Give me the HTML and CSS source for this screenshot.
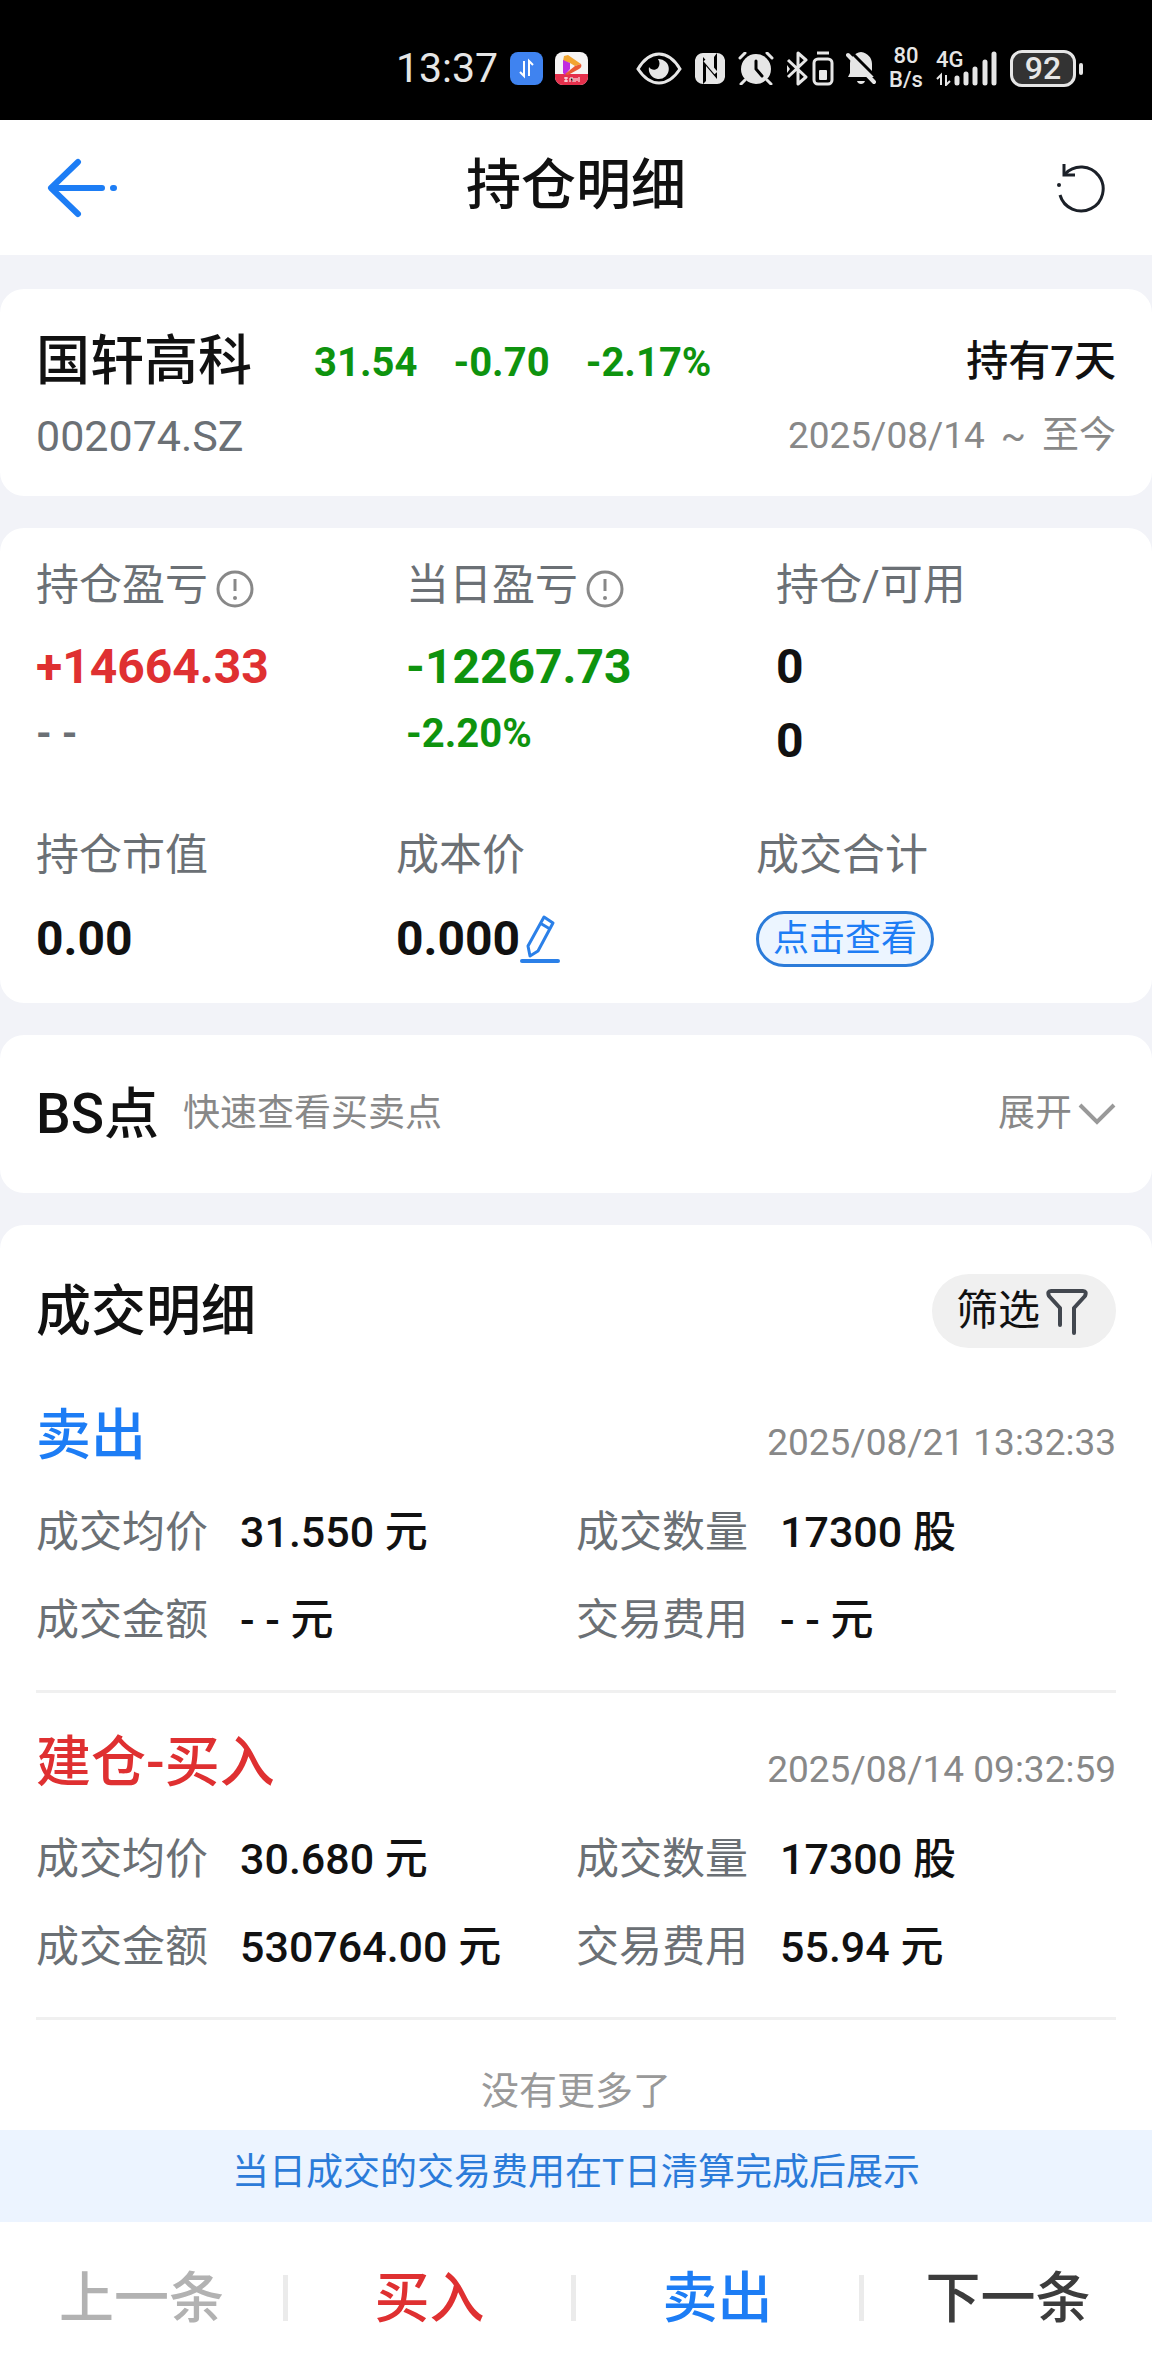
FILE: index.html
```html
<!DOCTYPE html>
<html lang="zh-CN">
<head>
    <meta charset="UTF-8">
    <meta name="viewport" content="width=device-width, initial-scale=1.0">
    <title>持仓明细</title>
    <link rel="stylesheet" href="styles.css">
</head>
<body>
    <div class="status-bar">
        <span class="clock">13:37</span>
        <svg class="app-icon" width="33" height="33" viewBox="0 0 33 33">
            <rect width="33" height="33" rx="8" fill="#3f83f0"/>
            <path d="M14 9v15l-4-4M19 24V9l4 4" fill="none" stroke="#fff" stroke-width="2"/>
        </svg>
        <svg class="app-icon" width="33" height="33" viewBox="0 0 33 33">
            <rect width="33" height="33" rx="8" fill="#f6f4f4"/>
            <path d="M0 22h33v3a8 8 0 0 1-8 8H8a8 8 0 0 1-8-8z" fill="#e5304c"/>
            <path d="M9 4l4-1 13 9-6 2-5-3-7-2z" fill="#f2a531"/>
            <path d="M8 8l7 3v6l-5 6-2-2z" fill="#c02be0"/>
            <path d="M26 12c1 2 0 4-2 5l-11 6-3-1 10-8z" fill="#ea5a34"/>
            <path d="M9 26h4M11 25v5M9 29h4M15 26v4M15 26h3v4M20 26v4M22 26v3M24 25v5" stroke="#fff" stroke-width="1"/>
        </svg>
        <svg class="eye" width="46" height="33" viewBox="0 0 46 33">
            <path d="M2 17C8 7 15 2 23 2s15 5 21 15c-6 9-13 14-21 14S8 26 2 17z" fill="none" stroke="#e6e6e6" stroke-width="3"/>
            <path d="M22 7a10 10 0 1 1-9 8c2 3 6 4 9 1 2-3 2-6 0-9z" fill="#e6e6e6"/>
        </svg>
        <svg width="32" height="33" viewBox="0 0 32 33">
            <path d="M9 1v31a8 8 0 0 1-8-7V8a8 8 0 0 1 8-7zM23 1a8 8 0 0 1 8 7v17a8 8 0 0 1-8 7z" fill="#e6e6e6"/>
            <path d="M9 1h14l-3 4v12L9 5zM9 32l3-3V14l11 13v5z" fill="#e6e6e6"/>
            <path d="M11 8l11 13" stroke="#e6e6e6" stroke-width="4"/>
        </svg>
        <svg width="36" height="33" viewBox="0 0 36 33">
            <circle cx="18" cy="17" r="15" fill="#e6e6e6"/>
            <path d="M2 6l5-5M34 6l-5-5M7 28l-4 4M29 28l4 4" stroke="#e6e6e6" stroke-width="3" stroke-linecap="round"/>
            <path d="M18 9v8l6 7" fill="none" stroke="#000" stroke-width="3" stroke-linecap="round"/>
        </svg>
        <svg width="48" height="35" viewBox="0 0 48 35">
            <path d="M2 9l18 17-8 7V2l8 7L2 26" fill="none" stroke="#e6e6e6" stroke-width="3" stroke-linejoin="round"/>
            <path d="M1 14l3 4-3 4z" fill="#e6e6e6"/>
            <rect x="28" y="8" width="18" height="25" rx="4" fill="none" stroke="#e6e6e6" stroke-width="3"/>
            <path d="M31 2h12" stroke="#e6e6e6" stroke-width="3"/>
            <rect x="33" y="19" width="8" height="10" rx="1" fill="#e6e6e6"/>
        </svg>
        <svg width="30" height="34" viewBox="0 0 30 34">
            <path d="M15 1c7 1 11 6 11 12v9l2 4H2l2-4v-9C4 7 8 2 15 1z" fill="#e6e6e6"/>
            <path d="M11 30h8c-1 4-7 4-8 0z" fill="#e6e6e6"/>
            <path d="M5 1l25 25" stroke="#000" stroke-width="3"/>
            <path d="M2 4l26 27" stroke="#e6e6e6" stroke-width="4" stroke-linecap="round"/>
        </svg>
        <span class="net-speed"><span>80</span><span>B/s</span></span>
        <span class="signal">
            <span class="signal-type">4G</span>
            <svg width="62" height="35" viewBox="0 0 62 35">
                <path d="M5 34V24l-4 4M10 24v10l4-4" fill="none" stroke="#e6e6e6" stroke-width="2"/>
                <path d="M21 27v5M30 23v9M39 18v14M49 11v21M58 3v29" stroke="#e6e6e6" stroke-width="5" stroke-linecap="round"/>
            </svg>
        </span>
        <span class="battery">92</span>
    </div>

    <header class="title-bar">
        <button class="nav-btn" aria-label="返回">
            <svg width="72" height="60" viewBox="0 0 72 60">
                <path d="M32 4L5 30l27 26M6 30h50M67 30h1" fill="none" stroke="#1d7df5" stroke-width="6" stroke-linecap="round" stroke-linejoin="round"/>
            </svg>
        </button>
        <h1>持仓明细</h1>
        <button class="nav-btn" aria-label="刷新">
            <svg width="50" height="54" viewBox="0 0 50 54">
                <path d="M9 13a22 22 0 1 1-5 21" fill="none" stroke="#1b2028" stroke-width="3"/>
                <path d="M8 3v11h11" fill="none" stroke="#1b2028" stroke-width="3"/>
                <circle cx="3" cy="24" r="2" fill="#1b2028"/>
            </svg>
        </button>
    </header>

    <main>
        <section class="card stock">
            <div class="stock-row">
                <h2 class="stock-name">国轩高科</h2>
                <div class="quote down">
                    <span>31.54</span>
                    <span>-0.70</span>
                    <span>-2.17%</span>
                </div>
                <span class="hold-days">持有7天</span>
            </div>
            <div class="stock-row">
                <span class="stock-code">002074.SZ</span>
                <span class="hold-range"><span>2025/08/14</span><span>~</span><span>至今</span></span>
            </div>
        </section>

        <section class="card position">
            <div class="profit-grid">
                <div>
                    <div class="label">持仓盈亏
                        <svg class="info" width="38" height="40" viewBox="0 0 38 40">
                            <circle cx="19" cy="20" r="17" fill="none" stroke="#888" stroke-width="3"/>
                            <path d="M19 10v12" stroke="#888" stroke-width="3"/>
                            <circle cx="19" cy="29" r="2" fill="#888"/>
                        </svg>
                    </div>
                    <div class="value up">+14664.33</div>
                    <div class="sub-value muted">- -</div>
                </div>
                <div>
                    <div class="label">当日盈亏
                        <svg class="info" width="38" height="40" viewBox="0 0 38 40">
                            <circle cx="19" cy="20" r="17" fill="none" stroke="#888" stroke-width="3"/>
                            <path d="M19 10v12" stroke="#888" stroke-width="3"/>
                            <circle cx="19" cy="29" r="2" fill="#888"/>
                        </svg>
                    </div>
                    <div class="value down">-12267.73</div>
                    <div class="sub-value down">-2.20%</div>
                </div>
                <div>
                    <div class="label">持仓/可用</div>
                    <div class="value">0</div>
                    <div class="value">0</div>
                </div>
            </div>
            <div class="cost-grid">
                <div>
                    <div class="label">持仓市值</div>
                    <div class="value">0.00</div>
                </div>
                <div>
                    <div class="label">成本价</div>
                    <div class="value">0.000
                        <button aria-label="修改成本价">
                            <svg width="40" height="50" viewBox="0 0 40 50">
                                <path d="M24 3l9 6-15 28-8 5-2-10zM20 9l10 6" fill="none" stroke="#2b80e8" stroke-width="3" stroke-linejoin="round"/>
                                <path d="M2 47h36" stroke="#2b80e8" stroke-width="4" stroke-linecap="round"/>
                            </svg>
                        </button>
                    </div>
                </div>
                <div>
                    <div class="label">成交合计</div>
                    <div class="value"><button class="view-btn">点击查看</button></div>
                </div>
            </div>
        </section>

        <section class="card bs-point">
            <h2>BS点</h2>
            <span class="hint">快速查看买卖点</span>
            <button class="expand-btn">展开
                <svg width="38" height="24" viewBox="0 0 38 24">
                    <path d="M2 3l17 17L36 3" fill="none" stroke="#999" stroke-width="4"/>
                </svg>
            </button>
        </section>

        <section class="card trades">
            <div class="trades-head">
                <h2>成交明细</h2>
                <button class="filter-btn">筛选
                    <svg width="42" height="48" viewBox="0 0 42 48">
                        <path d="M14 38V21L3 9Q1 4 5 4h32q4 0 2 5L28 21v25" fill="none" stroke="#42474f" stroke-width="4" stroke-linecap="round" stroke-linejoin="round"/>
                    </svg>
                </button>
            </div>

            <article class="trade">
                <div class="trade-title">
                    <h3 class="sell">卖出</h3>
                    <time>2025/08/21 13:32:33</time>
                </div>
                <dl>
                    <div><dt>成交均价</dt><dd>31.550 元</dd></div>
                    <div><dt>成交数量</dt><dd>17300 股</dd></div>
                    <div><dt>成交金额</dt><dd>- - 元</dd></div>
                    <div><dt>交易费用</dt><dd>- - 元</dd></div>
                </dl>
            </article>

            <article class="trade">
                <div class="trade-title">
                    <h3 class="up">建仓-买入</h3>
                    <time>2025/08/14 09:32:59</time>
                </div>
                <dl>
                    <div><dt>成交均价</dt><dd>30.680 元</dd></div>
                    <div><dt>成交数量</dt><dd>17300 股</dd></div>
                    <div><dt>成交金额</dt><dd>530764.00 元</dd></div>
                    <div><dt>交易费用</dt><dd>55.94 元</dd></div>
                </dl>
            </article>

            <p class="no-more">没有更多了</p>
        </section>
    </main>

    <p class="notice">当日成交的交易费用在T日清算完成后展示</p>

    <nav class="bottom-bar">
        <button disabled>上一条</button>
        <button class="up">买入</button>
        <button class="sell">卖出</button>
        <button>下一条</button>
    </nav>
</body>
</html>
```
FILE: styles.css
```css
* {
    box-sizing: border-box;
}
body {
    margin: 0;
    font-family: Roboto, "Noto Sans CJK SC", sans-serif;
    font-size: 43px;
    color: #111;
    background: #f2f3f8;
}
h1, h2, h3, p, dl, dd {
    margin: 0;
}
h1, h2, h3 {
    font-size: 55px;
    font-weight: 500;
    line-height: 70px;
}
button {
    padding: 0;
    border: none;
    background: none;
    font: inherit;
    color: inherit;
    cursor: pointer;
}
svg {
    display: block;
    flex: none;
}

/* system status bar */
.status-bar {
    display: flex;
    align-items: center;
    justify-content: flex-end;
    gap: 12px;
    height: 120px;
    padding: 16px 68px 0 0;
    background: #000;
    color: #e6e6e6;
}
.clock {
    font-size: 41px;
}
.eye {
    margin-left: 36px;
}
.net-speed {
    display: flex;
    flex-direction: column;
    align-items: center;
    width: 36px;
    font-size: 22px;
    line-height: 24px;
    font-weight: 500;
}
.signal {
    position: relative;
}
.signal-type {
    position: absolute;
    top: -3px;
    left: 0;
    font-size: 22px;
    line-height: 24px;
    font-weight: 500;
}
.battery {
    position: relative;
    width: 66px;
    margin-right: 8px;
    border: 3px solid #e6e6e6;
    border-radius: 12px;
    background: #333;
    font-size: 32px;
    line-height: 31px;
    font-weight: 500;
    text-align: center;
}
.battery::after {
    content: "";
    position: absolute;
    top: 10px;
    right: -10px;
    width: 4px;
    height: 12px;
    border-radius: 2px;
    background: #e6e6e6;
}

.title-bar {
    display: flex;
    align-items: center;
    justify-content: space-between;
    height: 135px;
    padding: 0 46px;
    background: #fff;
}
.title-bar h1 {
    padding-bottom: 6px;
}
.nav-btn {
    display: flex;
    justify-content: flex-end;
    width: 72px;
}

.up {
    color: #df3031;
}
.down {
    color: #0e930e;
}
.sell {
    color: #1d7df5;
}
.muted {
    color: #6b7075;
}

main {
    display: flex;
    flex-direction: column;
    gap: 32px;
    padding-top: 34px;
}
.card {
    padding: 0 36px;
    border-radius: 24px;
    background: #fff;
}

/* stock summary */
.stock {
    padding-top: 38px;
    padding-bottom: 30px;
}
.stock-row {
    display: flex;
    align-items: center;
    justify-content: space-between;
}
.stock-row + .stock-row {
    margin-top: 9px;
    line-height: 60px;
}
.stock-name {
    font-size: 54px;
}
.quote {
    display: flex;
    gap: 36px;
    margin-left: 62px;
    margin-right: auto;
    font-size: 40px;
    font-weight: bold;
}
.hold-days {
    font-size: 42px;
    font-weight: 500;
    line-height: 60px;
}
.stock-code {
    color: #6b7075;
}
.hold-range {
    display: flex;
    gap: 16px;
    font-size: 37px;
    color: #888;
}

/* position figures */
.position {
    padding-top: 27px;
    padding-bottom: 28px;
}
.profit-grid {
    display: grid;
    grid-template-columns: 370px 370px 1fr;
}
.cost-grid {
    display: grid;
    grid-template-columns: repeat(3, 1fr);
    margin-top: 48px;
}
.label {
    display: flex;
    align-items: center;
    gap: 8px;
    line-height: 60px;
    color: #6b7075;
}
.info {
    margin-top: 8px;
}
.value {
    display: flex;
    align-items: center;
    min-height: 72px;
    font-size: 48px;
    font-weight: bold;
    line-height: 72px;
}
.profit-grid .value {
    margin-top: 2px;
}
.profit-grid .label {
    margin-bottom: 16px;
}
.cost-grid .label {
    margin-bottom: 18px;
}
.sub-value {
    font-size: 40px;
    font-weight: bold;
    line-height: 62px;
}
.view-btn {
    padding: 0 14px;
    border: 3px solid #2b7bd9;
    border-radius: 28px;
    background: #ecf5ff;
    color: #1d7df5;
    font-size: 36px;
    font-weight: normal;
    line-height: 50px;
}

/* BS point */
.bs-point {
    display: flex;
    align-items: center;
    height: 158px;
}
.hint {
    margin-left: 24px;
    font-size: 37px;
    line-height: 60px;
    color: #888;
}
.expand-btn {
    display: flex;
    align-items: center;
    gap: 6px;
    margin-left: auto;
    font-size: 37px;
    line-height: 60px;
    color: #888;
}

/* trade list */
.trades {
    padding-top: 49px;
    border-bottom-left-radius: 0;
    border-bottom-right-radius: 0;
}
.trades-head {
    display: flex;
    align-items: center;
    justify-content: space-between;
    margin-bottom: 18px;
}
.filter-btn {
    display: flex;
    align-items: center;
    gap: 6px;
    height: 74px;
    padding: 0 28px 0 24px;
    border-radius: 37px;
    background: #f0f0f0;
    font-size: 42px;
    line-height: 60px;
}
.trade {
    padding: 34px 0 40px;
    border-bottom: 3px solid #f0f0f0;
}
.trade-title {
    display: flex;
    align-items: flex-end;
    justify-content: space-between;
}
.trade time {
    font-size: 37px;
    line-height: 54px;
    color: #888;
}
.trade dl {
    display: grid;
    grid-template-columns: 1fr 1fr;
    row-gap: 28px;
    margin-top: 32px;
    line-height: 60px;
}
.trade dl div {
    display: flex;
    gap: 32px;
}
.trade dt {
    color: #6b7075;
}
.trade dd {
    font-weight: 500;
}
.no-more {
    padding: 41px 0 9px;
    font-size: 38px;
    line-height: 60px;
    text-align: center;
    color: #999;
}

.notice {
    padding: 13px 0 19px;
    background: #ecf4ff;
    color: #2b7bd9;
    font-size: 37px;
    line-height: 60px;
    text-align: center;
}
.bottom-bar {
    display: grid;
    grid-template-columns: repeat(4, 1fr);
    height: 154px;
    padding: 53px 0 55px;
    background: #fff;
    font-size: 55px;
    font-weight: 500;
    line-height: 46px;
    color: #3c3c3c;
}
.bottom-bar button:not(:last-child) {
    border-right: 5px solid #ebebeb;
}
.bottom-bar button:disabled {
    color: #b2b2b2;
}
```
